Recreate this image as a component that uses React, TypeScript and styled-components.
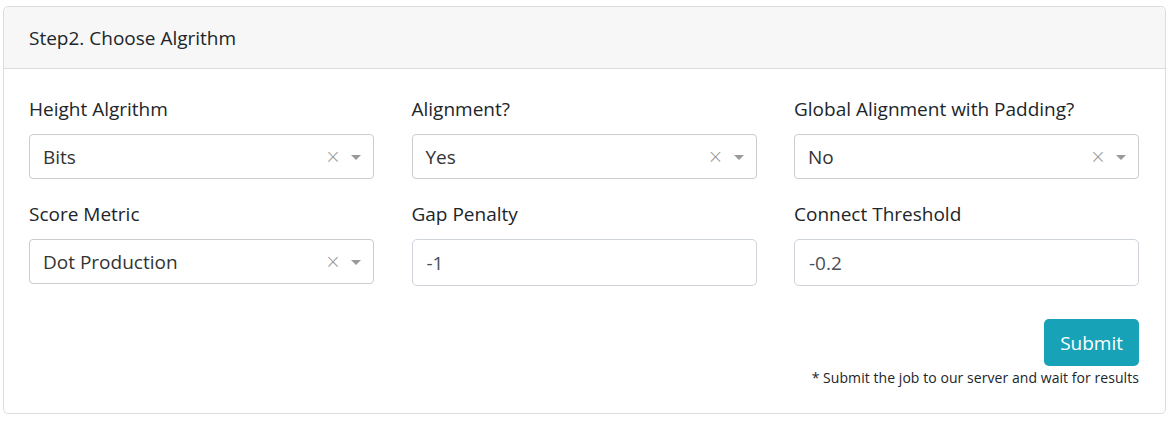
import React from 'react';
import styled, { createGlobalStyle } from 'styled-components';

const Global = createGlobalStyle`
  html, body {
    margin: 0;
    padding: 0;
    background: #fff;
  }
  body {
    font-family: 'Open Sans', 'Noto Sans', sans-serif;
    font-size: 19px;
    color: #212529;
  }
  * {
    box-sizing: border-box;
  }
`;

const Card = styled.div`
  margin: 6px 4px 0 3px;
  border: 1px solid #dcdcdc;
  border-radius: 5px;
  background: #fff;
`;

const CardHeader = styled.div`
  height: 62px;
  padding: 0 25px;
  display: flex;
  align-items: center;
  background: #f7f7f7;
  border-bottom: 1px solid #dcdcdc;
  border-radius: 5px 5px 0 0;
`;

const CardBody = styled.div`
  padding: 27px 26px 23px 25px;
`;

const Grid = styled.div`
  display: grid;
  grid-template-columns: repeat(3, 1fr);
  column-gap: 37.5px;
  row-gap: 22px;
`;

const Field = styled.div`
  display: flex;
  flex-direction: column;
`;

const Label = styled.label`
  line-height: 27px;
  margin-bottom: 11px;
`;

const SelectBox = styled.div`
  height: 45px;
  border: 1px solid #ccc;
  border-radius: 4px;
  display: flex;
  align-items: center;
  padding: 0 12px 0 13px;
  color: #333;
`;

const SelectValue = styled.span`
  flex: 1;
`;

const Clear = styled.span`
  color: #999;
  font-family: 'DejaVu Sans', sans-serif;
  font-size: 19px;
  font-weight: 300;
  line-height: 1;
  margin-right: 10px;
`;

const Arrow = styled.span`
  width: 0;
  height: 0;
  border-style: solid;
  border-width: 5px 5px 2.5px;
  border-color: #999 transparent transparent;
  margin-top: 3px;
`;

const Input = styled.input`
  height: 47px;
  border: 1px solid #ced4da;
  border-radius: 5px;
  padding: 0 14px;
  font: inherit;
  color: #495057;
  outline: none;
`;

const Footer = styled.div`
  margin-top: 33px;
  display: flex;
  flex-direction: column;
  align-items: flex-end;
`;

const SubmitButton = styled.button`
  height: 47px;
  padding: 0 16px;
  border: none;
  border-radius: 5px;
  background: #17a2b8;
  color: #fff;
  font: inherit;
  font-size: 19px;
  cursor: pointer;
`;

const Note = styled.small`
  font-size: 14px;
  letter-spacing: 0.06px;
  line-height: 24px;
`;

function Select({ value }: { value: string }) {
  return (
    <SelectBox>
      <SelectValue>{value}</SelectValue>
      <Clear>×</Clear>
      <Arrow />
    </SelectBox>
  );
}

export default function App() {
  return (
    <>
      <Global />
      <Card>
        <CardHeader>Step2. Choose Algrithm</CardHeader>
        <CardBody>
          <Grid>
            <Field>
              <Label>Height Algrithm</Label>
              <Select value="Bits" />
            </Field>
            <Field>
              <Label>Alignment?</Label>
              <Select value="Yes" />
            </Field>
            <Field>
              <Label>Global Alignment with Padding?</Label>
              <Select value="No" />
            </Field>
            <Field>
              <Label>Score Metric</Label>
              <Select value="Dot Production" />
            </Field>
            <Field>
              <Label>Gap Penalty</Label>
              <Input defaultValue="-1" />
            </Field>
            <Field>
              <Label>Connect Threshold</Label>
              <Input defaultValue="-0.2" />
            </Field>
          </Grid>
          <Footer>
            <SubmitButton>Submit</SubmitButton>
            <Note>* Submit the job to our server and wait for results</Note>
          </Footer>
        </CardBody>
      </Card>
    </>
  );
}
